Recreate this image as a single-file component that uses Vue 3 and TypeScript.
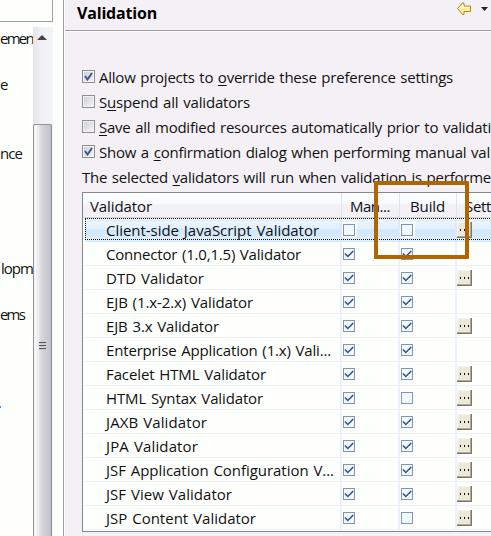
<script setup lang="ts">
import type { Directive } from 'vue'

interface Option { before: string; key: string; after: string; checked: boolean; width: number }
interface Validator { name: string; width: number; manual: boolean; build: boolean; settings: boolean }

const options: Option[] = [
  { before: 'Allow projects to ', key: 'o', after: 'verride these preference settings', checked: true, width: 354 },
  { before: 'S', key: 'u', after: 'spend all validators', checked: false, width: 151 },
  { before: '', key: 'S', after: 'ave all modified resources automatically prior to validati', checked: false, width: 392 },
  { before: 'Show a ', key: 'c', after: 'onfirmation dialog when performing manual val', checked: true, width: 391 },
]

const validators: Validator[] = [
  { name: 'Client-side JavaScript Validator', width: 213, manual: false, build: false, settings: true },
  { name: 'Connector (1.0,1.5) Validator', width: 195, manual: true, build: true, settings: false },
  { name: 'DTD Validator', width: 98, manual: true, build: true, settings: true },
  { name: 'EJB (1.x-2.x) Validator', width: 147, manual: true, build: true, settings: false },
  { name: 'EJB 3.x Validator', width: 113, manual: true, build: true, settings: true },
  { name: 'Enterprise Application (1.x) Vali...', width: 225, manual: true, build: true, settings: false },
  { name: 'Facelet HTML Validator', width: 160, manual: true, build: true, settings: true },
  { name: 'HTML Syntax Validator', width: 157, manual: true, build: false, settings: true },
  { name: 'JAXB Validator', width: 101, manual: true, build: true, settings: true },
  { name: 'JPA Validator', width: 92, manual: true, build: true, settings: true },
  { name: 'JSF Application Configuration V...', width: 228, manual: true, build: true, settings: true },
  { name: 'JSF View Validator', width: 126, manual: true, build: true, settings: true },
  { name: 'JSP Content Validator', width: 150, manual: true, build: false, settings: true },
]

/* Tracks a label so that it fills the given number of pixels. */
const vFit: Directive<HTMLElement, number> = {
  mounted(el, binding) {
    const count = (el.textContent ?? '').length
    const natural = el.getBoundingClientRect().width
    el.style.letterSpacing = `${(binding.value - natural) / count}px`
  },
}
</script>

<template>
  <div class="dialog">
    <aside class="nav">
      <div class="filter"></div>
      <div class="tree">
        <div class="tree-items">
          <span class="item i1"><span v-fit="33">emen</span></span>
          <span class="item i2">e</span>
          <span class="item i3"><span v-fit="22">nce</span></span>
          <span class="item i4"><span v-fit="32">lopm</span></span>
          <span class="item i5"><span v-fit="24">ems</span></span>
        </div>
        <div class="scrollbar">
          <div class="up"><svg width="10" height="6" viewBox="0 0 10 6"><path d="M5 0L10 5H0Z" fill="#444" /></svg></div>
          <div class="thumb"><div class="grip"><i></i><i></i><i></i></div></div>
        </div>
      </div>
      <b class="focus-bit"></b>
    </aside>

    <main class="page">
      <header class="title">
        <h1><span v-fit="80">Validation</span></h1>
        <svg class="back" width="16" height="14" viewBox="0 0 16 14">
          <path d="M0.500 6.500L5.500 1H7V4H13.500V9.500H7V12.500H5.500Z" fill="#fff0a0" stroke="#b88010" />
          <path d="M2.500 6.500L6 3V5.500H12.500" fill="none" stroke="#fffce8" />
        </svg>
        <svg class="menu" width="7" height="4" viewBox="0 0 7 4"><path d="M0 0H7L3.500 4Z" fill="#222" /></svg>
      </header>

      <section class="options">
        <label v-for="o in options" :key="o.after" class="option">
          <span class="check big">
            <svg v-if="o.checked" width="9" height="9" viewBox="0 0 9 9"><path d="M1 4L3.500 7.500L8 1" fill="none" stroke="#3d5795" stroke-width="2" /></svg>
          </span>
          <span v-fit="o.width" class="text">{{ o.before }}<u>{{ o.key }}</u>{{ o.after }}</span>
        </label>
      </section>
      <p class="hint"><span v-fit="409">The selected <u>v</u>alidators will run when validation is performe</span></p>

      <section class="table">
        <div class="row head">
          <div class="name"><span v-fit="62">Validator</span></div>
          <div class="cell"><span v-fit="40">Man...</span></div>
          <div class="cell build"><span v-fit="35">Build</span></div>
          <div class="cell last"><span v-fit="26">Sett</span></div>
        </div>
        <div v-for="(v, i) in validators" :key="v.name" class="row" :class="{ selected: i === 0 }">
          <div class="name"><span v-fit="v.width">{{ v.name }}</span></div>
          <div v-for="(on, c) in [v.manual, v.build]" :key="c" class="cell">
            <span class="check">
              <svg v-if="on" width="10" height="10" viewBox="0 0 10 10"><path d="M1 4.500L3.800 7.500L9.300 2" fill="none" stroke="#3a4d78" stroke-width="1.500" /></svg>
            </span>
          </div>
          <div class="cell last">
            <span v-if="v.settings" class="more"><i></i><i></i><i></i></span>
          </div>
        </div>
      </section>
      <div class="highlight"></div>
    </main>
  </div>
</template>

<style>
body { margin: 0; overflow: hidden; }
</style>

<style scoped>
* { box-sizing: border-box; }
.dialog {
  display: flex;
  width: 491px;
  height: 536px;
  overflow: hidden;
  background: #fdfffc;
  color: #111;
  font: 15px/24px "Open Sans", "Noto Sans", sans-serif;
  word-spacing: 1px;
  white-space: pre;
}
.nav { position: relative; width: 63px; flex: none; }
.filter { width: 53px; height: 22px; border: solid #a0a0a7; border-width: 0 1px 1px 0; }
.tree { display: flex; margin-top: 5px; height: 509px; }
.tree-items { width: 33px; margin-top: -1px; display: flex; flex-direction: column; }
.item { height: 24px; display: flex; flex: none; }
.i2 { margin-top: 22px; }
.i3 { margin-top: 45px; }
.i4 { margin-top: 91px; padding-left: 1px; }
.i5 { margin-top: 22px; }
.focus-bit { position: absolute; left: 0; top: 406px; width: 1px; height: 2px; background: #3190e0; }
.scrollbar { width: 20px; display: flex; flex-direction: column; background: linear-gradient(90deg, #e5e3e8, #f1f0f3 8px, #f4f3f6); }
.up { height: 97px; padding: 8px 0 0 4px; line-height: 0; }
.thumb {
  width: 19px;
  flex: 1;
  border: 1px solid #92929a;
  border-bottom: 0;
  border-radius: 2px 2px 0 0;
  background: linear-gradient(90deg, #f5f5f5 0 2px, #e9e9eb 5px, #d8d8db 7px, #c6c6cb 15px, #b9b9bf);
}
.grip { display: flex; flex-direction: column; gap: 1px; padding: 217px 0 0 5px; }
.grip i { width: 7px; height: 2px; background: #555; border-bottom: 1px solid #ccc; }
.page { position: relative; flex: 1; min-width: 0; overflow: hidden; border-left: 1px solid #a0a0a0; background: #f4f1f6; box-shadow: inset 1px 0 #fff; }
.title { display: flex; height: 31px; margin-left: 1px; border-bottom: 1px solid #a0a0a0; box-shadow: 0 1px #fff; }
h1 { margin: 0 0 0 12px; width: 380px; font-size: 16px; line-height: 26px; color: #000; }
.back { margin-top: 2px; flex: none; }
.menu { margin: 7px 0 0 8px; flex: none; }
.options { padding: 33px 0 0 18px; }
.option { display: flex; height: 25px; align-items: center; gap: 4px; }
.text { flex: none; }
u { text-decoration-thickness: 1px; text-underline-offset: 2px; }
.check {
  display: flex;
  align-items: center;
  justify-content: center;
  width: 12px;
  height: 12px;
  border: 1px solid #8294b4;
  background: #effaff;
  flex: none;
}
.big { width: 13px; height: 13px; border-color: #8e8f8f; background: linear-gradient(135deg, #cbcfd5, #f6f6f6); box-shadow: inset 0 0 0 1px #f4f4f4; }
.hint { margin: 0; padding-left: 18px; height: 28px; line-height: 26px; }
.table { width: 420px; height: 340px; margin: 0 0 0 18px; padding-left: 2px; background: #fdfffc; border: 1px solid #828790; border-right: 0; }
.row { display: grid; grid-template-columns: 257px 58px 57px 1fr; height: 24px; border-bottom: 1px solid #f1f1f5; }
.name { padding-left: 21px; border-right: 2px solid #f0f0fa; overflow: hidden; }
.cell { padding: 6px 0 0 1px; border-right: 2px solid #f0f0fa; height: 23px; overflow: hidden; }
.cell.last { padding: 4px 0 0; border: 0; }
.head { height: 25px; margin-left: -2px; grid-template-columns: 259px 58px 57px 1fr; background: linear-gradient(#fdfffc, #f5fafe 11px, #f3f1f6 12px); border-bottom: 1px solid #d5d5d5; line-height: 26px; }
.head .name { padding-left: 7px; }
.head .name, .head .cell { border-right: 1px solid #e2e3ea; }
.head .cell { height: 24px; padding: 0 0 0 8px; }
.head .build { padding-left: 10px; }
.head .last { border: 0; padding-left: 8px; }
.selected { background: linear-gradient(#edf6fe, #e2f0fd 11px, #cfe6fb 12px, #e1f0fd); position: relative; border-bottom: 1px solid #d7eafa; }
.selected::after { content: ""; position: absolute; inset: 0 0 1px; border: 1px dotted #111; border-right: 0; }
.selected .name, .selected .cell { border-color: #dce9f8; }
.selected .check { box-shadow: 0 0 0 2px #fbfdff; }
.more { display: flex; align-items: center; justify-content: center; gap: 3px; width: 15px; height: 16px; background: #ece9d8; border: solid #7e7869; border-width: 0 1px 1px 0; box-shadow: inset -1px -1px #aca899, inset 1px 1px #faf8f0; }
.more i { width: 1px; height: 2px; background: #111; }
.highlight { position: absolute; left: 310px; top: 181px; width: 95px; height: 78px; border: 4px solid #b06500; border-radius: 1px; }
</style>
